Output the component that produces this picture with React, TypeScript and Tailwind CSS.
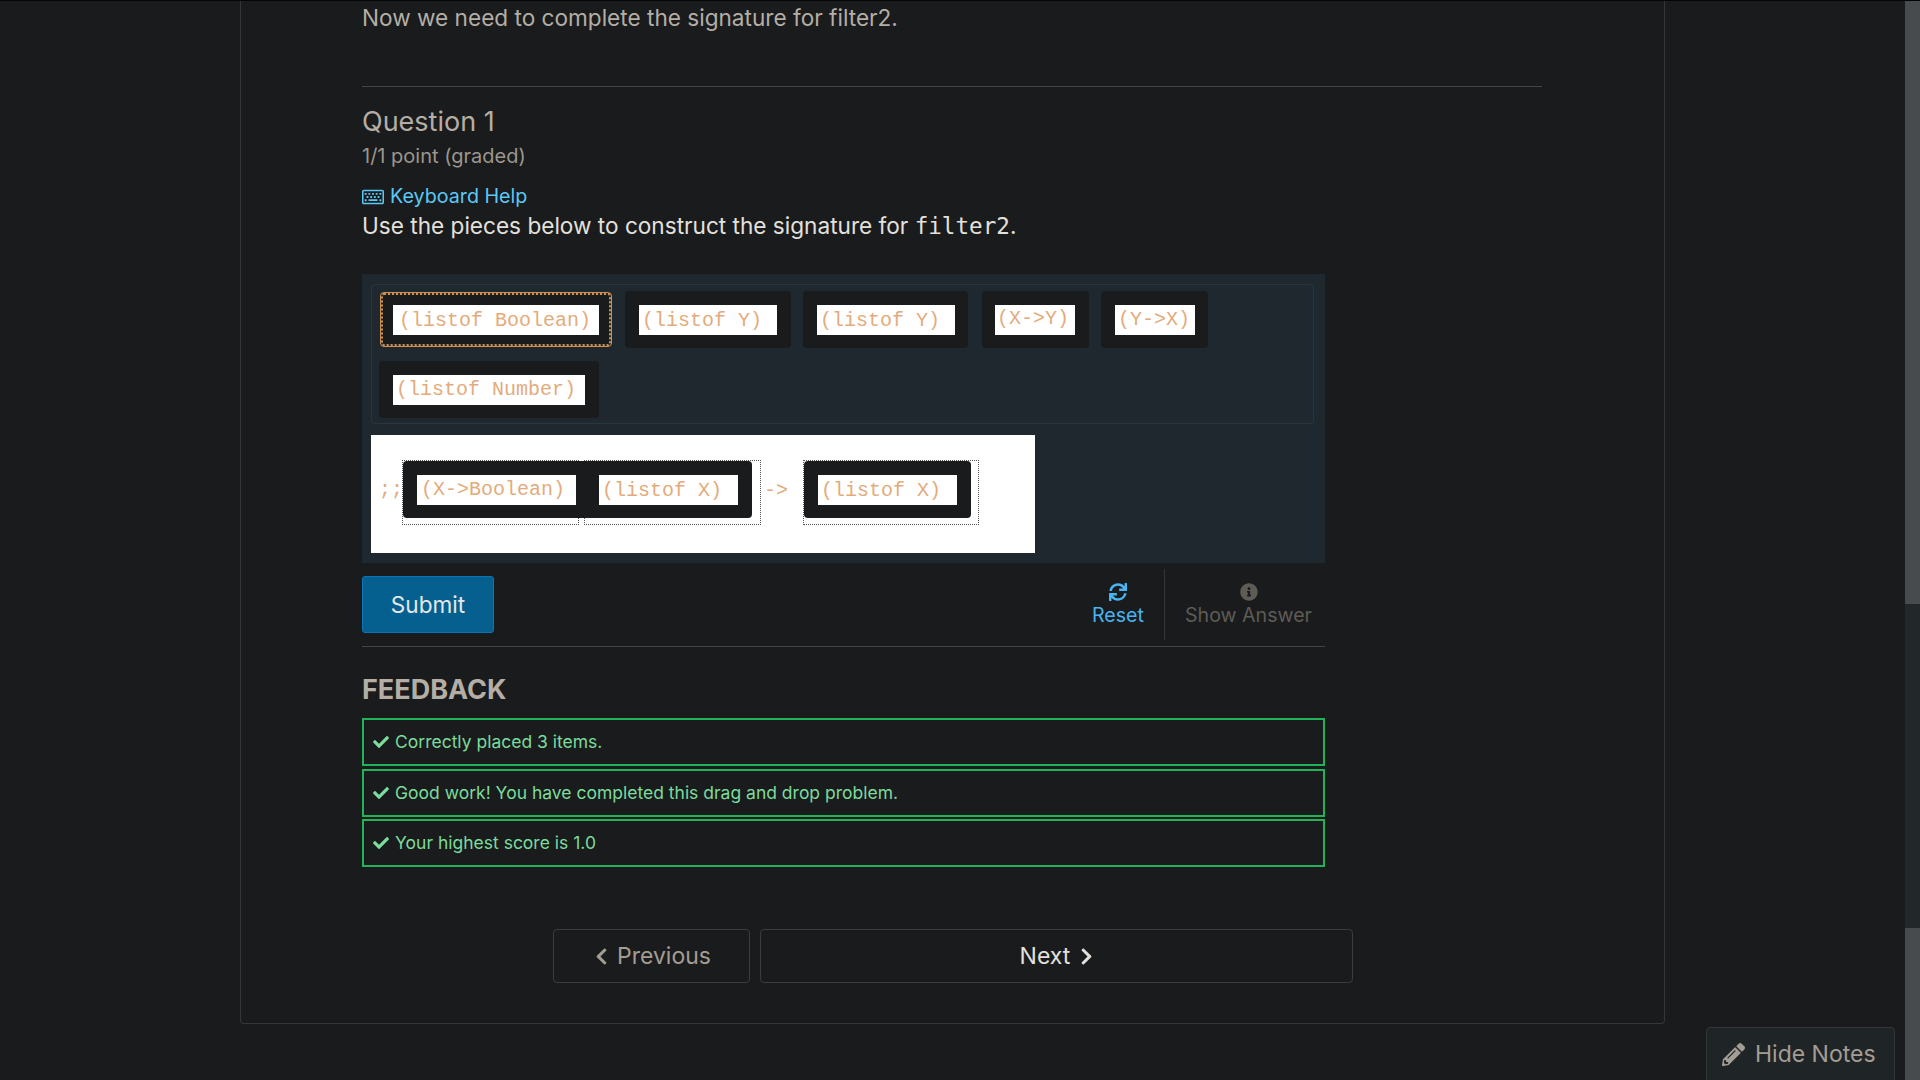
import { FaCheck, FaChevronLeft, FaChevronRight, FaInfoCircle, FaPencilAlt, FaRegKeyboard, FaSync } from "react-icons/fa";
import type { ReactNode } from "react";

/* One draggable piece: dark tile with the white label box inside it. */
function Piece({ label, tile, box, text, lead = "leading-[30px]" }: { label: string; tile: string; box: string; text: string; lead?: string }) {
  return (
    <div className={`flex shrink-0 items-center rounded-[4px] bg-[#191b1d] ${tile}`}>
      <div className={`h-[30px] overflow-hidden bg-white font-['Liberation_Mono',monospace] text-[20px] whitespace-pre text-[#e3ab7c] ${lead} ${box} ${text}`}>
        {label}
      </div>
    </div>
  );
}

function Slot({ className, children }: { className: string; children?: ReactNode }) {
  return <div className={`relative h-[65px] shrink-0 border border-dotted border-[#555] ${className}`}>{children}</div>;
}

function FeedbackRow({ className = "", children }: { className?: string; children: ReactNode }) {
  return (
    <div className={`flex h-[48px] items-center gap-[6px] border-2 border-[#22b25a] pl-[9px] text-[17.5px] text-[#7bdc9c] ${className}`}>
      <FaCheck size={16} />
      {children}
    </div>
  );
}

export default function App() {
  return (
    <div className="flex h-[1080px] w-[1920px] overflow-hidden border-t border-[#050505] bg-[#191b1d] font-['Inter',sans-serif]">
      <div className="min-w-0 flex-1 pl-[240px] pr-[240px]">
        <main className="h-[1023px] rounded-b-[4px] border-x border-b border-[#34373a] pl-[121px] pr-[122px]">
          <p className="h-[85px] text-[22.6px] leading-[34px] text-[#b4aea5]">Now we need to complete the signature for filter2.</p>
          <div className="h-px bg-[#424548]" />
          <h3 className="mt-[18px] text-[27px] leading-[34px] text-[#b4aea5]">Question 1</h3>
          <p className="mt-[3px] text-[20px] leading-[28px] text-[#9c968d]">1/1 point (graded)</p>
          <a className="mt-[13px] flex h-[28px] items-center gap-[6px] text-[19.7px] text-[#5cc8f5]">
            <FaRegKeyboard size={22} />
            Keyboard Help
          </a>
          <p className="h-[63px] text-[22.6px] leading-[30px] text-[#e4e1dc]">
            Use the pieces below to construct the signature for <code className="font-['DejaVu_Sans_Mono',monospace] text-[22.6px]">filter2</code>.
          </p>

          <section className="w-[963px] bg-[#1e282e] px-[9px] py-[10px]">
            <div className="flex h-[140px] w-[943px] flex-wrap content-start gap-x-[12px] gap-y-[13px] rounded-[4px] border border-[#2a363b] pl-[7px] pt-[6px]">
              <div className="my-px ml-px mr-px rounded-[4px] border border-[#d18f4d]">
                <div className="rounded-[3px] border-2 border-dotted border-[#d18f4d]">
                  <Piece label="(listof Boolean)" tile="h-[49px] w-[226px] pl-[10px]" box="w-[206px]" text="pl-[6px]" lead="leading-[31px]" />
                </div>
              </div>
              <Piece label="(listof Y)" tile="h-[57px] w-[166px] pl-[14px]" box="w-[138px]" text="pl-[3px]" lead="leading-[31px]" />
              <Piece label="(listof Y)" tile="h-[57px] w-[165px] pl-[14px]" box="w-[138px]" text="pl-[3px]" lead="leading-[31px]" />
              <Piece label="(X->Y)" tile="ml-[2px] h-[57px] w-[107px] pl-[13px]" box="w-[80px]" text="pl-[2px]" lead="leading-[27px]" />
              <Piece label="(Y->X)" tile="h-[57px] w-[107px] pl-[14px]" box="w-[80px]" text="pl-[3px]" />
              <Piece label="(listof Number)" tile="h-[57px] w-[220px] pl-[14px]" box="w-[192px]" text="pl-[3px]" />
            </div>
            <div className="mt-[11px] flex h-[118px] w-[664px] items-start bg-white pl-[8px] pt-[25px] font-['Liberation_Mono',monospace] text-[20px] text-[#e3ab7c]">
              <span className="mt-[15px] w-[23px]">;;</span>
              <Slot className="z-10 w-[177px]">
                <Piece label="(X->Boolean)" tile="h-[57px] w-[187px] pl-[14px]" box="w-[159px]" text="pl-[4px]" />
              </Slot>
              <Slot className="ml-[5px] w-[177px]">
                <Piece label="(listof X)" tile="h-[57px] w-[167px] pl-[14px]" box="w-[139px]" text="pl-[3px]" lead="leading-[31px]" />
              </Slot>
              <span className="ml-[3px] mt-[16px] w-[39px]">-&gt;</span>
              <Slot className="w-[176px]">
                <Piece label="(listof X)" tile="h-[57px] w-[167px] pl-[14px]" box="w-[139px]" text="pl-[3px]" lead="leading-[31px]" />
              </Slot>
            </div>
          </section>

          <div className="mt-[6px] flex h-[78px] w-[963px] items-center border-b border-[#424548] pb-[7px]">
            <button className="h-[57px] w-[132px] rounded-[3px] border border-[#0a75b8] bg-[#05608f] pt-[2px] text-[22.6px] text-[#e4e8ea]">Submit</button>
            <div className="ml-auto flex h-[71px] items-stretch">
              <div className="flex w-[81px] flex-col items-center pr-[11px] pt-[14px] text-[19.6px] leading-[28px] text-[#48b5f2]">
                <FaSync size={18} />
                Reset
              </div>
              <div className="flex w-[161px] flex-col items-center whitespace-nowrap border-l border-[#34373a] pl-[7px] pt-[14px] text-[19.6px] leading-[28px] text-[#5f5b55]">
                <FaInfoCircle size={18} />
                Show Answer
              </div>
            </div>
          </div>

          <h3 className="mt-[24px] pt-[2px] text-[27px] font-bold leading-[34px] text-[#b4aea5]">FEEDBACK</h3>
          <div className="mt-[11px] flex w-[963px] flex-col gap-[3px]">
            <FeedbackRow>Correctly placed 3 items.</FeedbackRow>
            <FeedbackRow>Good work! You have completed this drag and drop problem.</FeedbackRow>
            <FeedbackRow className="-mt-px">Your highest score is 1.0</FeedbackRow>
          </div>

          <nav className="ml-[191px] mt-[62px] flex gap-[10px] text-[23px]">
            <button className="flex h-[54px] w-[197px] items-center justify-center gap-[6px] rounded-[4px] border border-[#3a3d40] text-[#a39d94]">
              <FaChevronLeft size={19} />
              Previous
            </button>
            <button className="flex h-[54px] w-[593px] items-center justify-center gap-[7px] rounded-[4px] border border-[#3a3d40] pl-[3px] text-[#e4e1dc]">
              Next
              <FaChevronRight size={19} />
            </button>
          </nav>
        </main>
      </div>

      {/* scrollbar with the notes tab hanging over its left side */}
      <div className="relative flex w-[15px] shrink-0 flex-col bg-[#22282a]">
        <div className="h-[603px] bg-[#474b4e]" />
        <div className="mt-[324px] h-[152px] bg-[#474b4e]" />
        <button className="absolute right-[25px] top-[1026px] flex h-[60px] w-[189px] items-center gap-[10px] rounded-t-[4px] border border-[#34373a] bg-[#1f2426] pb-[6px] pl-[15px] text-[23px] text-[#a39d94]">
          <FaPencilAlt size={23} />
          Hide Notes
        </button>
      </div>
    </div>
  );
}
